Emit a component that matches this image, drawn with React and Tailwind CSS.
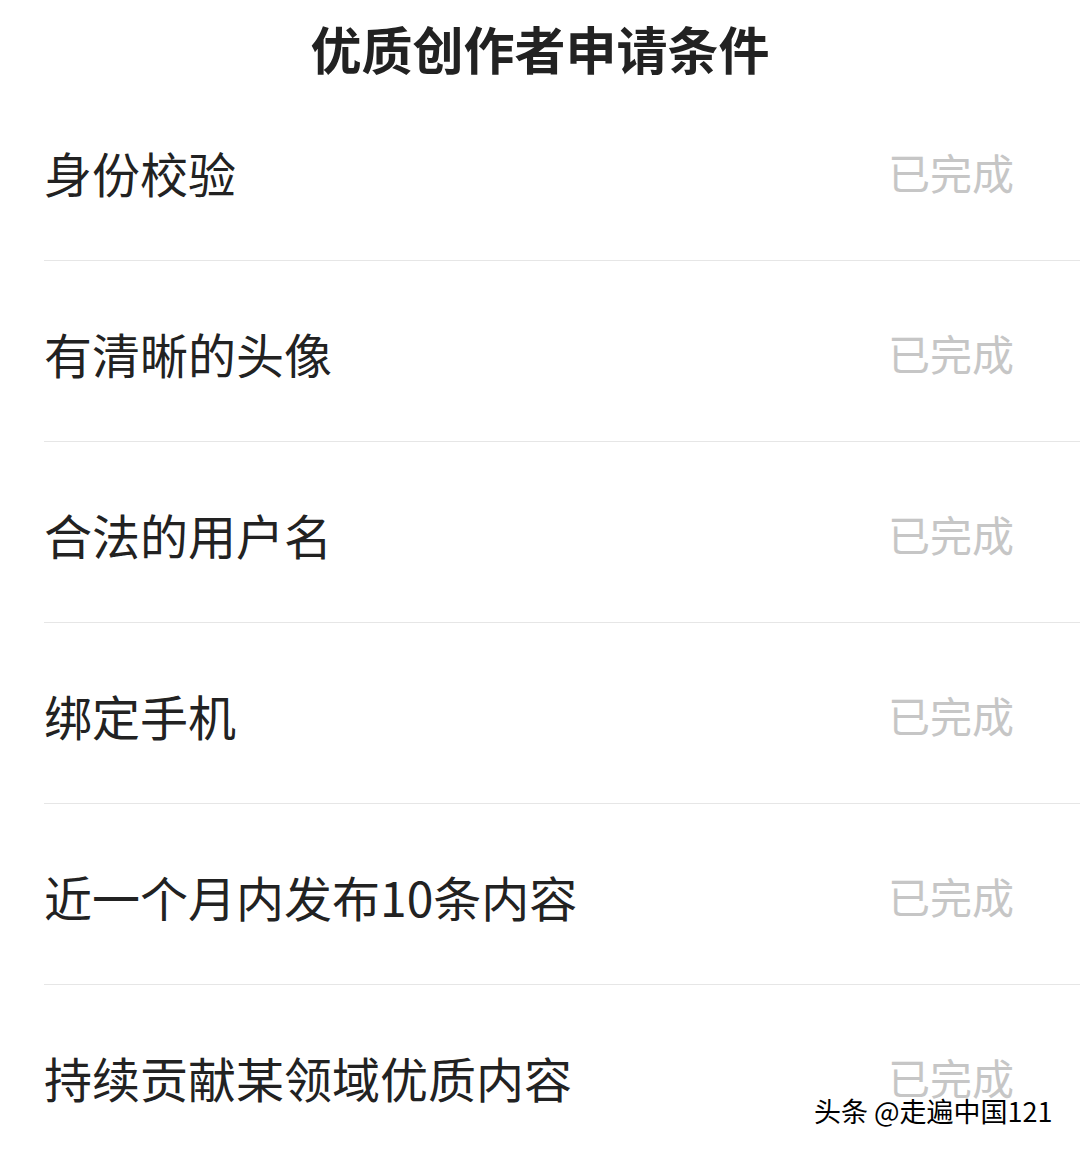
const rows = [
  '身份校验',
  '有清晰的头像',
  '合法的用户名',
  '绑定手机',
  '近一个月内发布10条内容',
  '持续贡献某领域优质内容',
]

export default function App() {
  return (
    <div className="relative h-[1151px] overflow-hidden bg-white font-['Noto_Sans_CJK_SC','Noto_Sans',sans-serif]">
      <div className="flex h-[80px] items-center justify-center">
        <h1 className="text-[51px] font-bold leading-none text-[#222] pt-[16px]">优质创作者申请条件</h1>
      </div>

      <ul className="pl-[44px]">
        {rows.map(label => (
          <li key={label} className="flex h-[181px] items-center justify-between border-b border-[#e6e6e6] pr-[66px] pt-[3px]">
            <span className="text-[48px] leading-none text-[#222]">{label}</span>
            <span className="text-[42px] leading-none text-[#c6c6c6]">已完成</span>
          </li>
        ))}
      </ul>

      <div className="absolute left-[814px] top-[1097px] text-[27px] leading-none text-black [text-shadow:0_0_2px_#fff,0_0_2px_#fff]">
        头条 @走遍中国121
      </div>
    </div>
  )
}
